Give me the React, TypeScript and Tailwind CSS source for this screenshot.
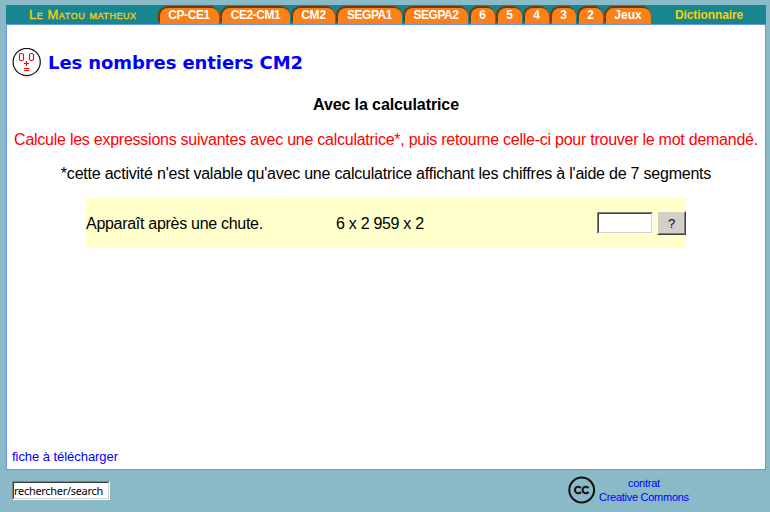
const tabs = [
  { label: "CP-CE1", cls: "w-[61px] tracking-[-0.45px]" },
  { label: "CE2-CM1", cls: "w-[70px] tracking-[-0.45px]" },
  { label: "CM2", cls: "w-[44px] tracking-[-0.2px]" },
  { label: "SEGPA1", cls: "w-[66px] tracking-[-0.5px]" },
  { label: "SEGPA2", cls: "w-[65px] tracking-[-0.5px]" },
  { label: "6", cls: "w-[26px]" },
  { label: "5", cls: "w-[26px]" },
  { label: "4", cls: "w-[26px]" },
  { label: "3", cls: "w-[26px]" },
  { label: "2", cls: "w-[26px]" },
  { label: "Jeux", cls: "w-[47px]" },
];

function Face() {
  return (
    <svg width="30" height="30" viewBox="0 0 30 30" fill="none" className="mt-[2px] shrink-0">
      <circle cx="14.7" cy="14" r="13.6" fill="white" stroke="#111" strokeWidth="1.2" />
      <g stroke="#ff0000" strokeWidth="1.1">
        <rect x="7.5" y="5.5" width="4" height="7" rx="1.5" />
        <rect x="17.5" y="5.5" width="4" height="7" rx="1.5" />
        <path d="M14.5 13v5M12 15.5h5M12 20.5h5M12 22.5h5" />
      </g>
    </svg>
  );
}

function CreativeCommons() {
  return (
    <svg width="28" height="28" viewBox="0 0 28 28" fill="none" className="shrink-0">
      <circle cx="13.7" cy="14" r="12.4" stroke="#111" strokeWidth="2" />
      <g stroke="#161616" strokeWidth="2.1">
        <path d="M12.9 12A3.3 3.3 0 1 0 12.9 16" />
        <path d="M20.5 12A3.3 3.3 0 1 0 20.5 16" />
      </g>
    </svg>
  );
}

export default function App() {
  return (
    <div className="h-[512px] w-[770px] overflow-hidden bg-[#8ab9c7] pl-[6px] pt-[5px] font-['Liberation_Sans',Arial,sans-serif] text-black">
      <header className="flex h-[19px] w-[760px] bg-[#17868f] text-[12px] font-bold leading-[20px]">
        <div className="w-[152px] whitespace-nowrap pl-[23px] text-[#f5cf10]">
          <span className="text-[13px] font-normal tracking-[0.55px] [-webkit-text-stroke:0.35px] [font-variant-caps:small-caps]">Le Matou matheux</span>
        </div>
        <nav className="flex gap-px pt-px text-white">
          {tabs.map((tab) => (
            <div key={tab.label} className={`${tab.cls} h-[18px] whitespace-nowrap rounded-t-[9px] bg-gradient-to-b from-[#713b0b] from-[16px] to-[#17868f] to-[16px] pl-[2px] pt-[2px]`}>
              <div className="h-[16px] rounded-t-[8px] bg-[#fa8017] pr-[1px] text-center leading-[14px]">{tab.label}</div>
            </div>
          ))}
        </nav>
        <div className="ml-[24px] tracking-[-0.1px] text-[#f5cf10]">Dictionnaire</div>
      </header>

      <main className="flex h-[446px] w-[760px] flex-col border border-[#6495ed] bg-white">
        <div className="flex h-[74px] items-center pl-[5px]">
          <Face />
          <h1 className="ml-[6px] whitespace-nowrap font-['DejaVu_Sans',Verdana,sans-serif] text-[18px] font-bold tracking-[-0.09px] text-[#0000ff]">Les nombres entiers CM2</h1>
        </div>
        <h2 className="-mt-[4px] h-[35px] text-center text-[16px] font-bold leading-[20px] tracking-[-0.1px]">Avec la calculatrice</h2>
        <p className="h-[34px] whitespace-nowrap text-center text-[16px] leading-[20px] tracking-[-0.25px] text-[#ff0000]">Calcule les expressions suivantes avec une calculatrice*, puis retourne celle-ci pour trouver le mot demandé.</p>
        <p className="h-[34px] whitespace-nowrap text-center text-[16px] leading-[20px] tracking-[-0.218px]">*cette activité n'est valable qu'avec une calculatrice affichant les chiffres à l'aide de 7 segments</p>
        <div className="ml-[79px] flex h-[50px] w-[600px] items-center bg-[#ffffcc] text-[16px] tracking-[-0.29px]">
          <span className="mt-[2px] w-[250px]">Apparaît après une chute.</span>
          <span className="mt-[2px] flex-1">6 x 2 959 x 2</span>
          <div className="h-[22px] w-[56px] border border-b-white border-l-[#808080] border-r-white border-t-[#808080]">
            <input className="block h-[20px] w-[54px] border border-b-[#d4d0c8] border-l-[#404040] border-r-[#d4d0c8] border-t-[#404040] bg-white px-1 text-[13px] outline-none" />
          </div>
          <div className="ml-[4px] h-[24px] w-[29px] border border-b-[#404040] border-l-white border-r-[#404040] border-t-white">
            <button className="block h-[22px] w-[27px] border border-b-[#808080] border-l-[#d4d0c8] border-r-[#808080] border-t-[#d4d0c8] bg-[#d4d0c8] text-[13px] leading-none">?</button>
          </div>
        </div>
        <a className="mb-[4px] ml-[5px] mt-auto whitespace-nowrap text-[13px] leading-[16px] tracking-[-0.05px] text-[#0000ff]">fiche à télécharger</a>
      </main>

      <footer className="flex h-[42px] w-[760px]">
        <div className="ml-[6px] mt-[11px] h-[19px] w-[98px] border border-b-white border-l-[#808080] border-r-white border-t-[#808080]">
          <input
            className="block h-[17px] w-[96px] border border-b-[#d4d0c8] border-l-[#404040] border-r-[#d4d0c8] border-t-[#404040] bg-white text-[11px] tracking-[-0.3px] outline-none font-['Noto_Sans',sans-serif]"
            defaultValue="rechercher/search"
          />
        </div>
        <div className="ml-[458px] mt-[6px]">
          <CreativeCommons />
        </div>
        <a className="ml-[3px] mt-[6px] whitespace-nowrap text-center text-[11px] leading-[14px] tracking-[-0.27px] text-[#0000ff]">
          contrat
          <br />
          Creative Commons
        </a>
      </footer>
    </div>
  );
}
